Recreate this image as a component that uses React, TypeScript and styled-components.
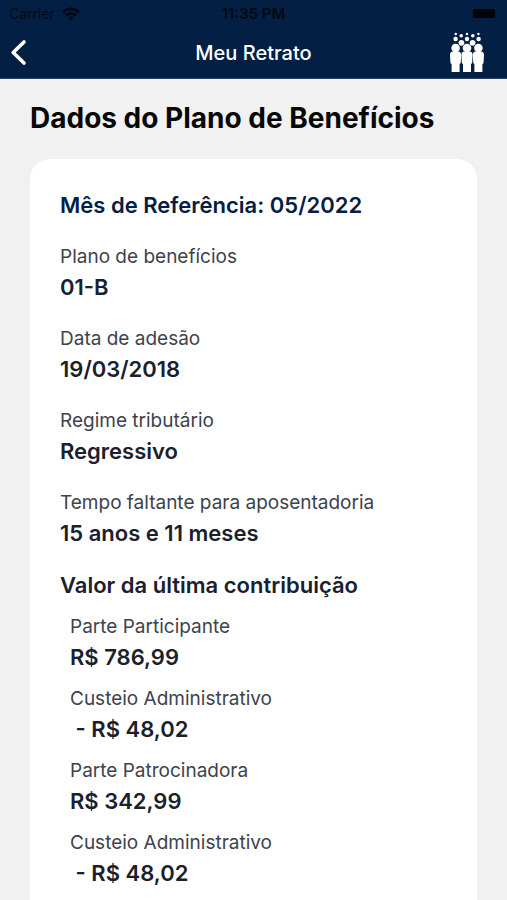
import React from "react";
import styled, { createGlobalStyle } from "styled-components";

const GlobalStyle = createGlobalStyle`
  *, *::before, *::after { box-sizing: border-box; }
  body {
    margin: 0;
    background: #f1f1f1;
    font-family: Inter, "Liberation Sans", sans-serif;
    color: #1a202c;
  }
  h1, h2, h3, dl, dt, dd { margin: 0; }
`;

const Screen = styled.div`
  min-height: 100vh;
  background: #f1f1f1;
`;

const Header = styled.header`
  background: #032044;
  border-bottom: 1px solid #28405f;
`;

const StatusBar = styled.div`
  display: grid;
  grid-template-columns: 1fr auto 1fr;
  align-items: center;
  height: 27px;
  padding: 0 9px;
  color: #010812;
  font-size: 14px;
  line-height: 16px;
`;

const Carrier = styled.span`
  display: flex;
  align-items: center;
  gap: 7px;
`;

const Clock = styled.time`
  font-size: 15px;
  font-weight: 600;
`;

const Battery = styled.span`
  justify-self: end;
  width: 22px;
  height: 9px;
  margin-right: 3px;
  border-radius: 2px;
  background: #000206;
`;

const NavBar = styled.nav`
  display: grid;
  grid-template-columns: 1fr auto 1fr;
  align-items: center;
  height: 51px;
  padding: 0 22px 0 10px;
`;

const BackButton = styled.button`
  display: flex;
  justify-self: start;
  padding: 0;
  border: 0;
  background: none;
  color: #fff;
  cursor: pointer;
`;

const NavTitle = styled.h1`
  padding-left: 12px;
  color: #fff;
  font-size: 20px;
  font-weight: 500;
  line-height: 28px;
`;

const Logo = styled.svg`
  justify-self: end;
`;

const Content = styled.main`
  display: flex;
  flex-direction: column;
  gap: 22px;
  padding: 20px 30px 0;
`;

const PageTitle = styled.h2`
  color: #080808;
  font-size: 28px;
  font-weight: 700;
  line-height: 38px;
`;

const Card = styled.section`
  display: flex;
  flex-direction: column;
  gap: 20px;
  padding: 30px;
  border-radius: 20px;
  background: #fff;
`;

const CardHeading = styled.h3<{ $accent?: boolean }>`
  color: ${(p) => (p.$accent ? "#032044" : "#1a202c")};
  font-size: 22px;
  font-weight: 600;
  line-height: 32px;
`;

const FieldList = styled.dl<{ $nested?: boolean }>`
  display: flex;
  flex-direction: column;
  gap: ${(p) => (p.$nested ? "10px" : "20px")};
  padding-left: ${(p) => (p.$nested ? "10px" : "0")};
`;

const Group = styled.div`
  display: flex;
  flex-direction: column;
  gap: 10px;
`;

const Label = styled.dt`
  color: #3d424c;
  font-size: 19px;
  line-height: 32px;
`;

const Value = styled.dd`
  padding-bottom: 2px;
  font-size: 22px;
  font-weight: 600;
  line-height: 28px;
  white-space: pre;
`;

type Entry = { label: string; value: string };

const planFields: Entry[] = [
  { label: "Plano de benefícios", value: "01-B" },
  { label: "Data de adesão", value: "19/03/2018" },
  { label: "Regime tributário", value: "Regressivo" },
  { label: "Tempo faltante para aposentadoria", value: "15 anos e 11 meses" },
];

const contributions: Entry[] = [
  { label: "Parte Participante", value: "R$ 786,99" },
  { label: "Custeio Administrativo", value: " - R$ 48,02" },
  { label: "Parte Patrocinadora", value: "R$ 342,99" },
  { label: "Custeio Administrativo", value: " - R$ 48,02" },
];

function Fields({ items, nested }: { items: Entry[]; nested?: boolean }) {
  return (
    <FieldList $nested={nested}>
      {items.map((item, i) => (
        <div key={i}>
          <Label>{item.label}</Label>
          <Value>{item.value}</Value>
        </div>
      ))}
    </FieldList>
  );
}

function WifiIcon() {
  return (
    <svg width="18" height="14" viewBox="0 0 18 14" fill="none" stroke="currentColor" strokeWidth="2.7" aria-hidden="true">
      <path d="M1 5.2C5.4.8 12.6.8 17 5.2" />
      <path d="M4 8.5c2.8-2.7 7.2-2.7 10 0" />
      <path d="M9 13.6 6.1 10.7c1.6-1.5 4.2-1.5 5.8 0z" fill="currentColor" stroke="none" />
    </svg>
  );
}

function BackIcon() {
  return (
    <svg width="17" height="28" viewBox="0 0 17 28" fill="none" stroke="currentColor" strokeWidth="3.6" strokeLinecap="round" strokeLinejoin="round" aria-hidden="true">
      <path d="M14 3 3.2 13.5 14 24" />
    </svg>
  );
}

const people = [6.6, 18, 29.4];
const dots = [
  [6.8, 2, 1.2], [18, 2, 1.2], [29.4, 2, 1.2],
  [12.2, 3.8, 1.8], [23.8, 3.8, 1.8],
  [6.6, 7, 2.2], [18, 7, 2.2], [29.6, 7, 2.2],
  [12.4, 10.8, 2.9], [23.6, 10.8, 2.9],
];

function PeopleLogo() {
  return (
    <Logo width="36" height="41" viewBox="0 0 36 41" fill="#fff" role="img" aria-label="Logo">
      {dots.map(([cx, cy, r]) => (
        <circle key={`${cx}-${cy}`} cx={cx} cy={cy} r={r} />
      ))}
      {people.map((x) => (
        <g key={x}>
          <circle cx={x} cy="16" r="4.3" />
          <path d={`M${x - 2.8} 19.4h5.6c1.8 0 2.8 1.3 2.8 3.2l-.4 7.6c-.1 1-.6 1.5-1.2 1.7V40h-8v-8.1c-.6-.2-1.1-.7-1.2-1.7l-.4-7.6c0-1.9 1-3.2 2.8-3.2z`} />
        </g>
      ))}
    </Logo>
  );
}

export default function App() {
  return (
    <Screen>
      <GlobalStyle />
      <Header>
        <StatusBar>
          <Carrier>
            Carrier
            <WifiIcon />
          </Carrier>
          <Clock>11:35 PM</Clock>
          <Battery />
        </StatusBar>
        <NavBar>
          <BackButton type="button" aria-label="Voltar">
            <BackIcon />
          </BackButton>
          <NavTitle>Meu Retrato</NavTitle>
          <PeopleLogo />
        </NavBar>
      </Header>
      <Content>
        <PageTitle>Dados do Plano de Benefícios</PageTitle>
        <Card>
          <CardHeading $accent>Mês de Referência: 05/2022</CardHeading>
          <Fields items={planFields} />
          <Group>
            <CardHeading>Valor da última contribuição</CardHeading>
            <Fields items={contributions} nested />
          </Group>
        </Card>
      </Content>
    </Screen>
  );
}
